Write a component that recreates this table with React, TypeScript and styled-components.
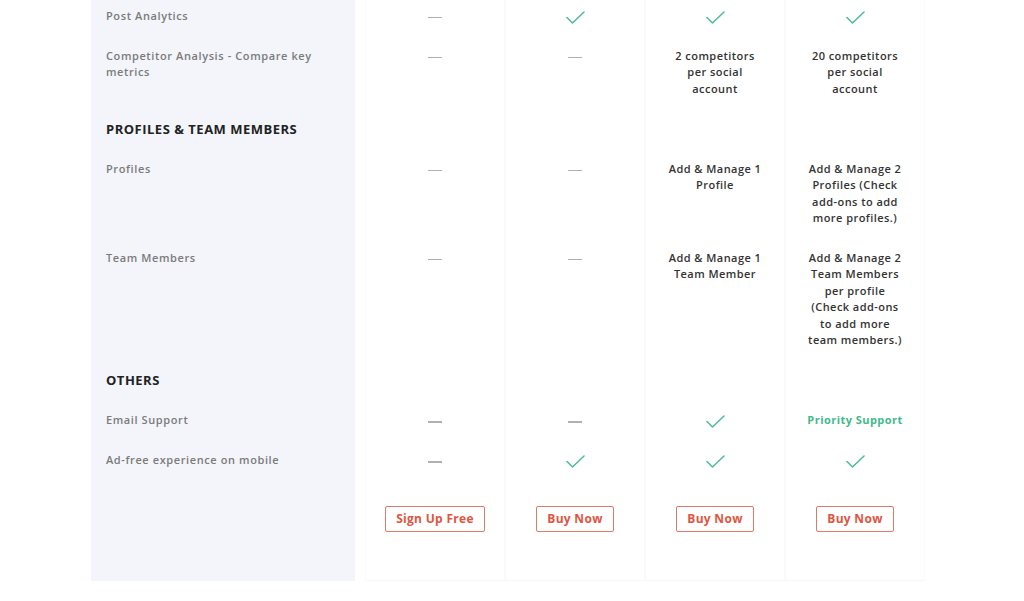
import React from 'react';
import styled, { createGlobalStyle } from 'styled-components';

const GlobalStyle = createGlobalStyle`
  html, body {
    margin: 0;
    padding: 0;
    background: #ffffff;
  }
  body {
    font-family: "Open Sans", "Liberation Sans", sans-serif;
    overflow: hidden;
  }
`;

const Page = styled.div`
  width: 1024px;
  height: 601px;
  overflow: hidden;
`;

const Table = styled.div`
  display: grid;
  grid-template-columns: 274px repeat(4, 140px);
  margin: -4px 0 0 91px;
`;

const FeatureCell = styled.div<{ $heading?: boolean; $last?: boolean }>`
  margin-right: 10px;
  background: #f3f5fa;
  padding: 11.72px 15px ${(p) => (p.$last ? '51px' : '11.72px')};
  font-size: ${(p) => (p.$heading ? '13px' : '11px')};
  font-weight: ${(p) => (p.$heading ? 700 : 600)};
  line-height: 16.5px;
  letter-spacing: ${(p) => (p.$heading ? '0.5px' : '0.6px')};
  color: ${(p) => (p.$heading ? '#222222' : '#7b7b7b')};
`;

const PlanCell = styled.div<{ $last?: boolean }>`
  display: flex;
  flex-direction: column;
  align-items: center;
  padding: ${(p) => (p.$last ? '25px 0 48px' : '11.72px 0')};
  border-left: 1px solid #fafafa;
  border-right: 1px solid #fafafa;
  border-bottom: ${(p) => (p.$last ? '1px solid #f7f7f7' : 'none')};
  font-size: 11px;
  font-weight: 600;
  line-height: 16.5px;
  letter-spacing: 0.45px;
  color: #333333;
  text-align: center;
`;

const Line = styled.span`
  display: block;
  white-space: nowrap;
`;

const Highlight = styled.span`
  color: #3fba8c;
  font-weight: 700;
`;

const Dash = styled.span`
  display: block;
  width: 14px;
  height: 1.5px;
  margin: 9px 0 6px;
  background: #b0b0b0;
`;

const CheckMark = styled.svg`
  display: block;
  margin-top: 3px;
`;

const Button = styled.button`
  height: 26px;
  padding: 0 10px;
  border: 1px solid #de7a66;
  border-radius: 2px;
  background: #ffffff;
  color: #e1553f;
  font-family: "Open Sans", "Liberation Sans", sans-serif;
  font-size: 12px;
  font-weight: 700;
  letter-spacing: 0.3px;
  cursor: pointer;
`;

type Value = 'dash' | 'check' | string[] | { highlight: string };

type Row =
  | { kind: 'heading'; title: string }
  | { kind: 'feature'; label: string[]; values: Value[] };

const rows: Row[] = [
  { kind: 'feature', label: ['Post Analytics'], values: ['dash', 'check', 'check', 'check'] },
  {
    kind: 'feature',
    label: ['Competitor Analysis - Compare key', 'metrics'],
    values: [
      'dash',
      'dash',
      ['2 competitors', 'per social', 'account'],
      ['20 competitors', 'per social', 'account'],
    ],
  },
  { kind: 'heading', title: 'PROFILES & TEAM MEMBERS' },
  {
    kind: 'feature',
    label: ['Profiles'],
    values: [
      'dash',
      'dash',
      ['Add & Manage 1', 'Profile'],
      ['Add & Manage 2', 'Profiles (Check', 'add-ons to add', 'more profiles.)'],
    ],
  },
  {
    kind: 'feature',
    label: ['Team Members'],
    values: [
      'dash',
      'dash',
      ['Add & Manage 1', 'Team Member'],
      [
        'Add & Manage 2',
        'Team Members',
        'per profile',
        '(Check add-ons',
        'to add more',
        'team members.)',
      ],
    ],
  },
  { kind: 'heading', title: 'OTHERS' },
  {
    kind: 'feature',
    label: ['Email Support'],
    values: ['dash', 'dash', 'check', { highlight: 'Priority Support' }],
  },
  {
    kind: 'feature',
    label: ['Ad-free experience on mobile'],
    values: ['dash', 'check', 'check', 'check'],
  },
];

const buttons = ['Sign Up Free', 'Buy Now', 'Buy Now', 'Buy Now'];

const Check = () => (
  <CheckMark width="19" height="13" viewBox="0 0 19 13">
    <polyline
      points="1,6.5 6.5,12 18,1"
      fill="none"
      stroke="#52bb9c"
      strokeWidth="1.6"
      strokeLinecap="round"
      strokeLinejoin="round"
    />
  </CheckMark>
);

const renderValue = (v: Value) => {
  if (v === 'dash') return <Dash />;
  if (v === 'check') return <Check />;
  if (Array.isArray(v)) return v.map((t, i) => <Line key={i}>{t}</Line>);
  return <Highlight>{v.highlight}</Highlight>;
};

const App = () => {
  return (
    <Page>
      <GlobalStyle />
      <Table>
        {rows.map((row, i) =>
          row.kind === 'heading' ? (
            <React.Fragment key={i}>
              <FeatureCell $heading>{row.title}</FeatureCell>
              <PlanCell />
              <PlanCell />
              <PlanCell />
              <PlanCell />
            </React.Fragment>
          ) : (
            <React.Fragment key={i}>
              <FeatureCell>
                {row.label.map((t, j) => (
                  <Line key={j}>{t}</Line>
                ))}
              </FeatureCell>
              {row.values.map((v, j) => (
                <PlanCell key={j}>{renderValue(v)}</PlanCell>
              ))}
            </React.Fragment>
          )
        )}
        <FeatureCell $last />
        {buttons.map((b, j) => (
          <PlanCell key={j} $last>
            <Button>{b}</Button>
          </PlanCell>
        ))}
      </Table>
    </Page>
  );
};

export default App;
